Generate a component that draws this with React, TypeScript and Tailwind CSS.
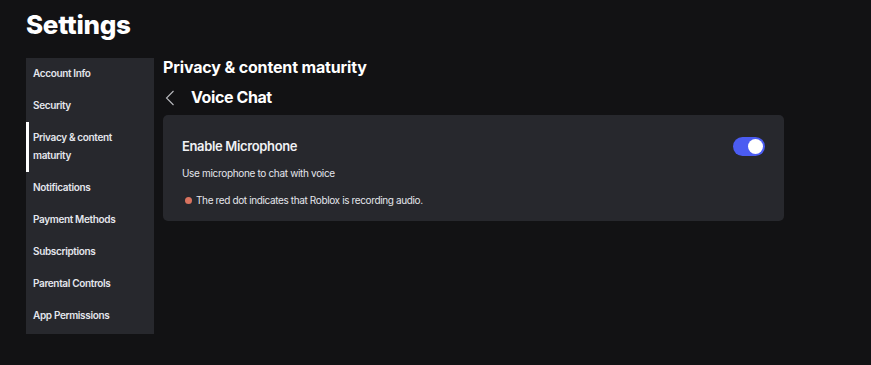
const navItems = [
  "Account Info",
  "Security",
  "Privacy & content maturity",
  "Notifications",
  "Payment Methods",
  "Subscriptions",
  "Parental Controls",
  "App Permissions",
];

const App = () => {
  const active = "Privacy & content maturity";

  return (
    <div className="min-h-[365px] w-full bg-[#121214] text-white font-['Inter',sans-serif]">
      <div className="px-[26px] pt-[8px]">
        <h1 className="text-[26px] font-extrabold leading-[34px] tracking-[-0.3px]">Settings</h1>

        <div className="mt-[16px] flex gap-[9px]">
          {/* Side nav */}
          <aside className="w-[128px] shrink-0 bg-[#27282d] pb-[2px]">
            <ul>
              {navItems.map((item) => (
                <li key={item}>
                  <a
                    href="#"
                    className={`block px-[7px] pt-[6px] pb-[8px] text-[10px] font-semibold leading-[18px] tracking-[-0.35px] text-[#e4e6ec] ${
                      item === active ? "border-l-[3px] border-white pl-[4px] pr-[10px]" : ""
                    }`}
                  >
                    {item}
                  </a>
                </li>
              ))}
            </ul>
          </aside>

          {/* Main content */}
          <main className="w-[621px]">
            <h2 className="text-[16px] font-bold leading-[20px] -mt-[1px] tracking-[-0.15px]">
              Privacy &amp; content maturity
            </h2>
            <div className="mt-[10px] flex h-[20px] items-start">
              <svg width="16" height="16" viewBox="0 0 16 16" fill="none" className="mt-[3px] shrink-0">
                <path d="M10.5 1 L3.5 8 L10.5 15" stroke="#b9babf" strokeWidth="1.1" />
              </svg>
              <span className="ml-[12px] text-[16px] font-bold leading-[20px] tracking-[-0.4px]">Voice Chat</span>
            </div>

            <section className="mt-[8px] rounded-[5px] bg-[#27282d] px-[19px] pt-[21px] pb-[13px]">
              <div className="flex items-center justify-between">
                <span className="text-[13px] font-semibold leading-[20px] tracking-[-0.35px] text-[#f0f1f4]">
                  Enable Microphone
                </span>
                <button className="flex h-[19px] w-[32px] items-center justify-end rounded-full bg-[#4b5cf2] px-[2px]">
                  <span className="h-[15px] w-[15px] rounded-full bg-white" />
                </button>
              </div>
              <p className="mt-[9px] text-[10px] leading-[16px] tracking-[-0.33px] text-[#e4e6ec]">
                Use microphone to chat with voice
              </p>
              <p className="mt-[11px] flex items-center text-[10px] leading-[16px] tracking-[-0.37px] text-[#e4e6ec]">
                <span className="ml-[3px] mr-[4px] inline-block h-[7px] w-[7px] rounded-full bg-[#d9735f]" />
                The red dot indicates that Roblox is recording audio.
              </p>
            </section>
          </main>
        </div>
      </div>
    </div>
  );
};

export default App;
